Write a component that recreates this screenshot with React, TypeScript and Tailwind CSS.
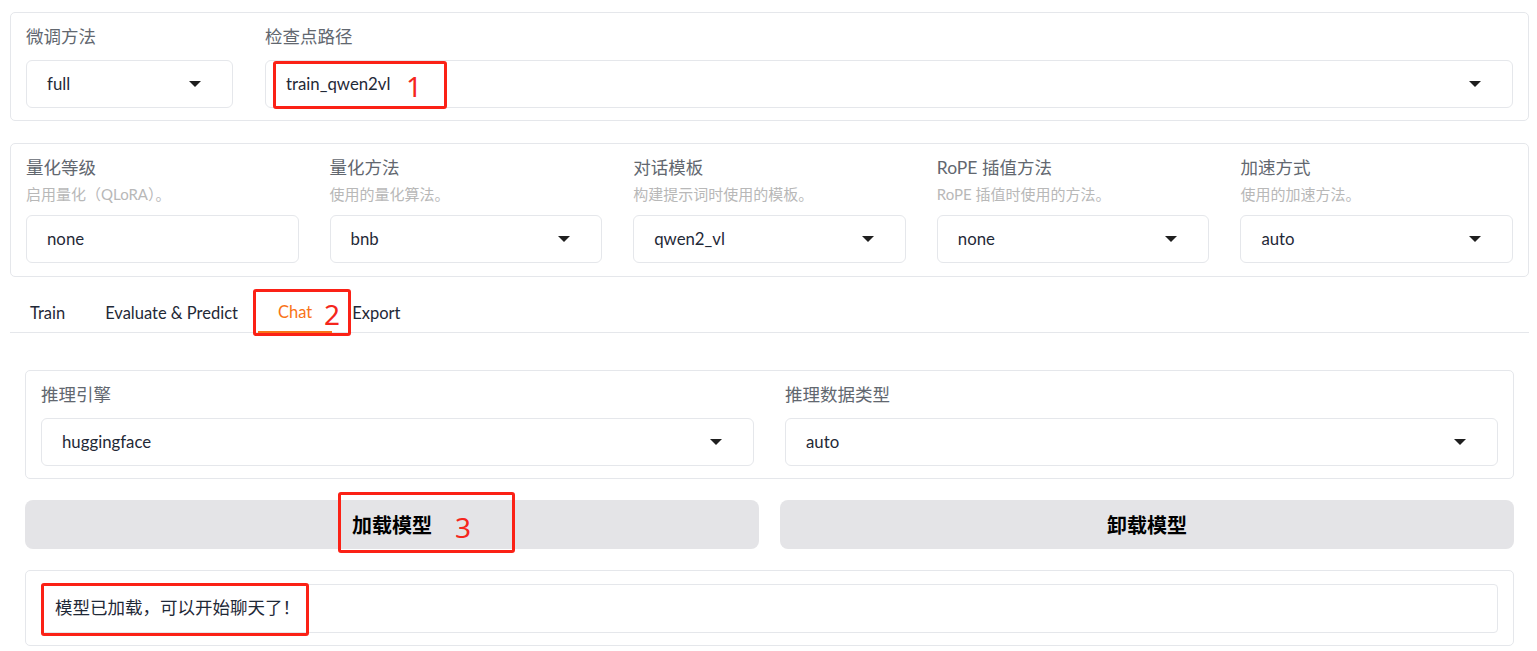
import React from "react";

const font = { fontFamily: '"Lato", "Noto Sans CJK SC", sans-serif' };

function Caret() {
  return (
    <svg width="12" height="6" viewBox="0 0 12 6" className="shrink-0">
      <path d="M0 0 L12 0 L6 6 Z" fill="#1f1f1f" />
    </svg>
  );
}

function Label({ children }: { children: React.ReactNode }) {
  return <div className="h-[24px] leading-[24px] text-[17.5px] text-[#62676f]">{children}</div>;
}

function Hint({ children }: { children: React.ReactNode }) {
  return <div className="mt-[4px] h-[20px] leading-[20px] text-[15px] text-[#b8b8b8]">{children}</div>;
}

function Select({ value, arrow = true }: { value: string; arrow?: boolean }) {
  return (
    <div className="mt-[11px] h-[48px] flex items-center justify-between border border-[#e5e7eb] rounded-[6px] pl-[20px] pr-[31px] text-[16.8px] text-[#1f2937] bg-white">
      <span>{value}</span>
      {arrow && <Caret />}
    </div>
  );
}

function Mark({ x, y, w, h }: { x: number; y: number; w: number; h: number }) {
  return (
    <div
      className="absolute border-[3px] border-[#fb2116] rounded-[3px] pointer-events-none"
      style={{ left: x, top: y, width: w, height: h }}
    />
  );
}

function Num({ x, y, n }: { x: number; y: number; n: string }) {
  return (
    <span
      className="absolute text-[28px] leading-[28px] text-[#f5261c] pointer-events-none"
      style={{ left: x, top: y, fontFamily: '"Noto Sans", sans-serif' }}
    >
      {n}
    </span>
  );
}

const quant = [
  { label: "量化等级", hint: "启用量化（QLoRA）。", value: "none", arrow: false },
  { label: "量化方法", hint: "使用的量化算法。", value: "bnb", arrow: true },
  { label: "对话模板", hint: "构建提示词时使用的模板。", value: "qwen2_vl", arrow: true },
  { label: "RoPE 插值方法", hint: "RoPE 插值时使用的方法。", value: "none", arrow: true },
  { label: "加速方式", hint: "使用的加速方法。", value: "auto", arrow: true },
];

const tabs = ["Train", "Evaluate & Predict", "Chat", "Export"];

export default function App() {
  return (
    <div className="relative w-full min-h-[651px] bg-white pl-[10px] pr-[8px] pt-[12px]" style={font}>
      {/* finetune + checkpoint */}
      <div className="flex gap-[32px] border border-[#e5e7eb] rounded-[5px] px-[15px] py-[12px]">
        <div className="w-[207px]">
          <Label>微调方法</Label>
          <Select value="full" />
        </div>
        <div className="flex-1">
          <Label>检查点路径</Label>
          <Select value="train_qwen2vl" />
        </div>
      </div>

      {/* quantization row */}
      <div className="mt-[22px] grid grid-cols-5 gap-[31px] border border-[#e5e7eb] rounded-[5px] px-[15px] pt-[12px] pb-[13px]">
        {quant.map((q) => (
          <div key={q.label}>
            <Label>{q.label}</Label>
            <Hint>{q.hint}</Hint>
            <Select value={q.value} arrow={q.arrow} />
          </div>
        ))}
      </div>

      {/* tabs */}
      <div className="mt-[16px] flex border-b border-[#e5e7eb]">
        {tabs.map((t) => (
          <button
            key={t}
            className={
              t === "Chat"
                ? "h-[40px] px-[20px] -mb-px text-[16.5px] text-[#f97316] border-b-2 border-[#f97316]"
                : "h-[40px] px-[20px] -mb-px text-[16.5px] text-[#1f2937]"
            }
          >
            {t}
          </button>
        ))}
      </div>

      {/* chat tab */}
      <div className="px-[15px] pt-[37px]">
        <div className="grid grid-cols-2 gap-[31px] border border-[#e5e7eb] rounded-[5px] px-[15px] py-[12px]">
          <div>
            <Label>推理引擎</Label>
            <Select value="huggingface" />
          </div>
          <div>
            <Label>推理数据类型</Label>
            <Select value="auto" />
          </div>
        </div>

        <div className="mt-[21px] grid grid-cols-2 gap-[21px]">
          <button className="h-[49px] rounded-[8px] bg-[#e4e4e7] text-[20px] font-bold text-black">加载模型</button>
          <button className="h-[49px] rounded-[8px] bg-[#e4e4e7] text-[20px] font-bold text-black">卸载模型</button>
        </div>

        <div className="mt-[21px] border border-[#e5e7eb] rounded-[5px] px-[15px] pt-[13px] pb-[12px]">
          <div className="h-[49px] flex items-center border border-[#e5e7eb] rounded-[4px] px-[13px] text-[17.5px] text-[#1f2937]">
            模型已加载，可以开始聊天了！
          </div>
        </div>
      </div>

      {/* annotations */}
      <Mark x={273} y={61} w={174} h={48} />
      <Num x={406} y={72} n="1" />
      <Mark x={253} y={289} w={98} h={47} />
      <Num x={324} y={300} n="2" />
      <Mark x={338} y={492} w={177} h={61} />
      <Num x={455} y={513} n="3" />
      <Mark x={41} y={583} w={268} h={53} />
    </div>
  );
}
